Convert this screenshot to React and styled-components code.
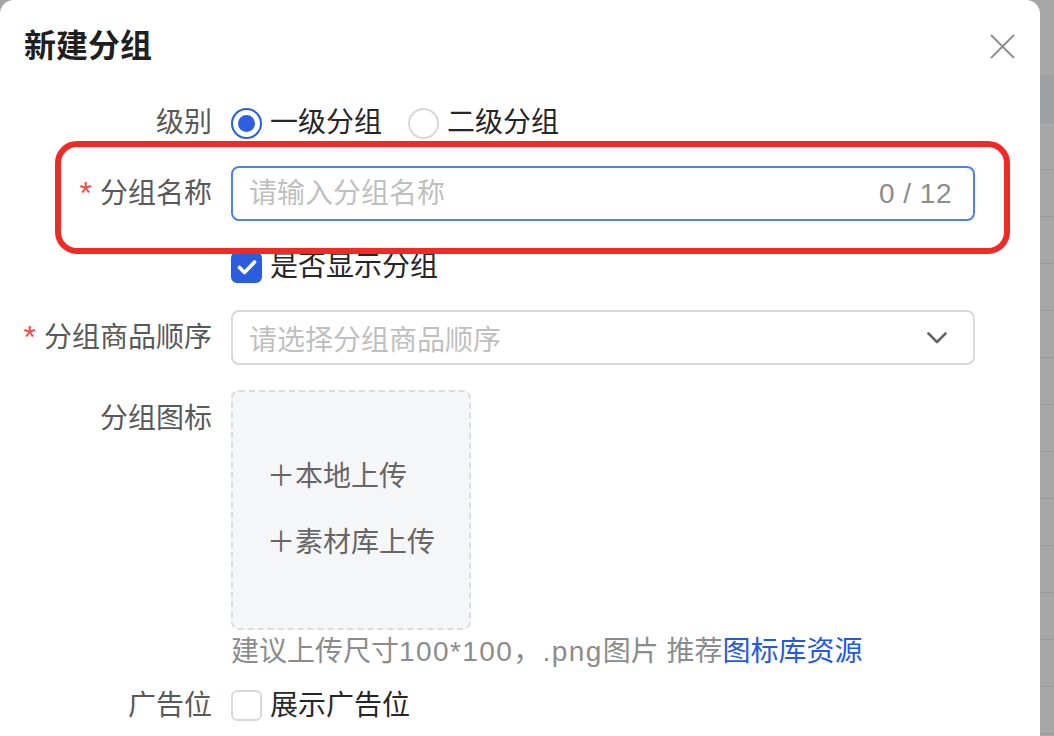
import React from 'react'
import styled, { createGlobalStyle } from 'styled-components'

const GlobalStyle = createGlobalStyle`
  html, body {
    margin: 0;
    padding: 0;
    background: #a6a6a6;
    overflow: hidden;
  }
  body {
    font-family: "Liberation Sans", "Noto Sans CJK SC", sans-serif;
  }
`

const Screen = styled.div`
  display: flex;
  width: 1054px;
  height: 736px;
  overflow: hidden;
`

const Dialog = styled.div`
  position: relative;
  flex: none;
  width: 1040px;
  height: 736px;
  background: #fff;
  border-radius: 14px 14px 0 0;
`

// table rows of the page behind the mask
const Backdrop = styled.div`
  flex: 1;
  display: flex;
  flex-direction: column;
  padding-top: 75px;
`

const BackdropHead = styled.div`
  height: 48px;
  background: #9fa0a2;
`

const BackdropRow = styled.div`
  height: 46px;
  border-bottom: 1px solid #999;
`

const Header = styled.div`
  display: flex;
  align-items: center;
  justify-content: space-between;
  height: 92px;
  padding: 0 25px 0 24px;
`

const Title = styled.h2`
  margin: 0;
  font-size: 32px;
  line-height: 40px;
  font-weight: 600;
  color: #1f1f1f;
`

const Close = styled.button`
  width: 25px;
  height: 25px;
  padding: 0;
  border: none;
  background: none;
  color: #8c8c8c;
`

const Form = styled.div`
  padding: 3px 65px 0 0;
`

const Item = styled.div`
  display: grid;
  grid-template-columns: 212px 1fr;
  column-gap: 19px;
  align-items: ${p => (p.$top ? 'start' : 'center')};
  margin-bottom: ${p => p.$mb || 0}px;
`

const Label = styled.div`
  text-align: right;
  white-space: nowrap;
  font-size: 28px;
  line-height: ${p => p.$lh || 56}px;
  color: #595959;
`

const Required = styled.span`
  margin-right: 8px;
  font-family: "Liberation Sans", sans-serif;
  font-size: 32px;
  color: #f5484a;
  vertical-align: -1px;
`

const Group = styled.div`
  display: flex;
  align-items: center;
  height: ${p => p.$h || 56}px;
`

const Option = styled.label`
  display: flex;
  align-items: center;
  gap: 8px;
  margin-right: 26px;
  font-size: 28px;
  line-height: 36px;
  color: #262626;
`

const RadioDot = styled.span`
  box-sizing: border-box;
  display: flex;
  align-items: center;
  justify-content: center;
  width: 31px;
  height: 31px;
  border-radius: 50%;
  border: 2px solid ${p => (p.$on ? '#2b5fe0' : '#d9d9d9')};
  background: #fff;
  &::after {
    content: '';
    display: ${p => (p.$on ? 'block' : 'none')};
    width: 17px;
    height: 17px;
    border-radius: 50%;
    background: #2b5fe0;
  }
`

const CheckBox = styled.span`
  box-sizing: border-box;
  display: flex;
  align-items: center;
  justify-content: center;
  width: 31px;
  height: 31px;
  border-radius: 6px;
  border: 2px solid ${p => (p.$on ? '#2b5de0' : '#d9d9d9')};
  background: ${p => (p.$on ? '#2b5de0' : '#fff')};
`

const Field = styled.div`
  box-sizing: border-box;
  display: flex;
  align-items: center;
  height: 55px;
  padding: 0 ${p => p.$pr || 21}px 0 16px;
  border: 2px solid ${p => (p.$focus ? '#4c82ea' : '#d9d9d9')};
  border-radius: 8px;
  background: #fff;
`

const TextInput = styled.input`
  flex: 1;
  min-width: 0;
  border: none;
  outline: none;
  padding: 0;
  font: inherit;
  font-size: 28px;
  color: #262626;
  background: transparent;
  &::placeholder {
    color: #bfbfbf;
  }
`

const Placeholder = styled.span`
  flex: 1;
  font-size: 28px;
  color: #bfbfbf;
`

const Count = styled.span`
  font-size: 28px;
  letter-spacing: 0.5px;
  color: #8c8c8c;
`

const Upload = styled.div`
  box-sizing: border-box;
  display: flex;
  flex-direction: column;
  justify-content: center;
  gap: 26px;
  width: 240px;
  height: 240px;
  padding-left: 34px;
  border: 2px dashed #dcdcdc;
  border-radius: 8px;
  background: #f5f6f8;
`

const UploadAction = styled.span`
  font-size: 28px;
  line-height: 40px;
  color: #666;
`

const Hint = styled.div`
  margin-top: 4px;
  font-size: 28px;
  line-height: 36px;
  color: #8c8c8c;
  white-space: nowrap;
`

const Latin = styled.span`
  letter-spacing: 1.4px;
`

const Link = styled.a`
  color: #1f5ae0;
  text-decoration: none;
`

const Marker = styled.div`
  position: absolute;
  left: 55px;
  top: 141px;
  box-sizing: border-box;
  width: 955px;
  height: 113px;
  border: 6px solid #f02b25;
  border-radius: 22px;
  pointer-events: none;
`

const Check = () => (
  <svg width="20" height="16" viewBox="0 0 20 16" fill="none">
    <path d="M2.5 8.5l5 5L17.5 3" stroke="#fff" strokeWidth="3.6" strokeLinecap="round" strokeLinejoin="round" />
  </svg>
)

const App = () => (
  <>
    <GlobalStyle />
    <Screen>
      <Dialog>
        <Header>
          <Title>新建分组</Title>
          <Close aria-label="关闭">
            <svg width="25" height="25" viewBox="0 0 25 25">
              <path d="M1 1l23 23M24 1L1 24" stroke="currentColor" strokeWidth="1.8" />
            </svg>
          </Close>
        </Header>

        <Form>
          <Item $mb={15}>
            <Label>级别</Label>
            <Group>
              <Option>
                <RadioDot $on />
                一级分组
              </Option>
              <Option>
                <RadioDot />
                二级分组
              </Option>
            </Group>
          </Item>

          <Item $mb={30}>
            <Label $lh={55}>
              <Required>*</Required>分组名称
            </Label>
            <Field $focus>
              <TextInput placeholder="请输入分组名称" />
              <Count>0 / 12</Count>
            </Field>
          </Item>

          <Item $mb={27}>
            <Label $lh={32} />
            <Group $h={32}>
              <Option>
                <CheckBox $on>
                  <Check />
                </CheckBox>
                是否显示分组
              </Option>
            </Group>
          </Item>

          <Item $mb={25}>
            <Label $lh={55}>
              <Required>*</Required>分组商品顺序
            </Label>
            <Field $pr={26}>
              <Placeholder>请选择分组商品顺序</Placeholder>
              <svg width="20" height="12" viewBox="0 0 20 12" fill="none">
                <path d="M1.5 1.5l8.5 8.5 8.5-8.5" stroke="#666" strokeWidth="2.6" strokeLinecap="round" strokeLinejoin="round" />
              </svg>
            </Field>
          </Item>

          <Item $top $mb={20}>
            <Label $lh={58}>分组图标</Label>
            <div>
              <Upload>
                <UploadAction>＋本地上传</UploadAction>
                <UploadAction>＋素材库上传</UploadAction>
              </Upload>
              <Hint>
                建议上传尺寸<Latin>100*100，.png</Latin>图片 推荐<Link href="#">图标库资源</Link>
              </Hint>
            </div>
          </Item>

          <Item>
            <Label $lh={31}>广告位</Label>
            <Group $h={31}>
              <Option>
                <CheckBox />
                展示广告位
              </Option>
            </Group>
          </Item>
        </Form>

        <Marker />
      </Dialog>

      <Backdrop>
        <BackdropHead />
        {Array.from({ length: 13 }).map((_, i) => (
          <BackdropRow key={i} />
        ))}
      </Backdrop>
    </Screen>
  </>
)

export default App
